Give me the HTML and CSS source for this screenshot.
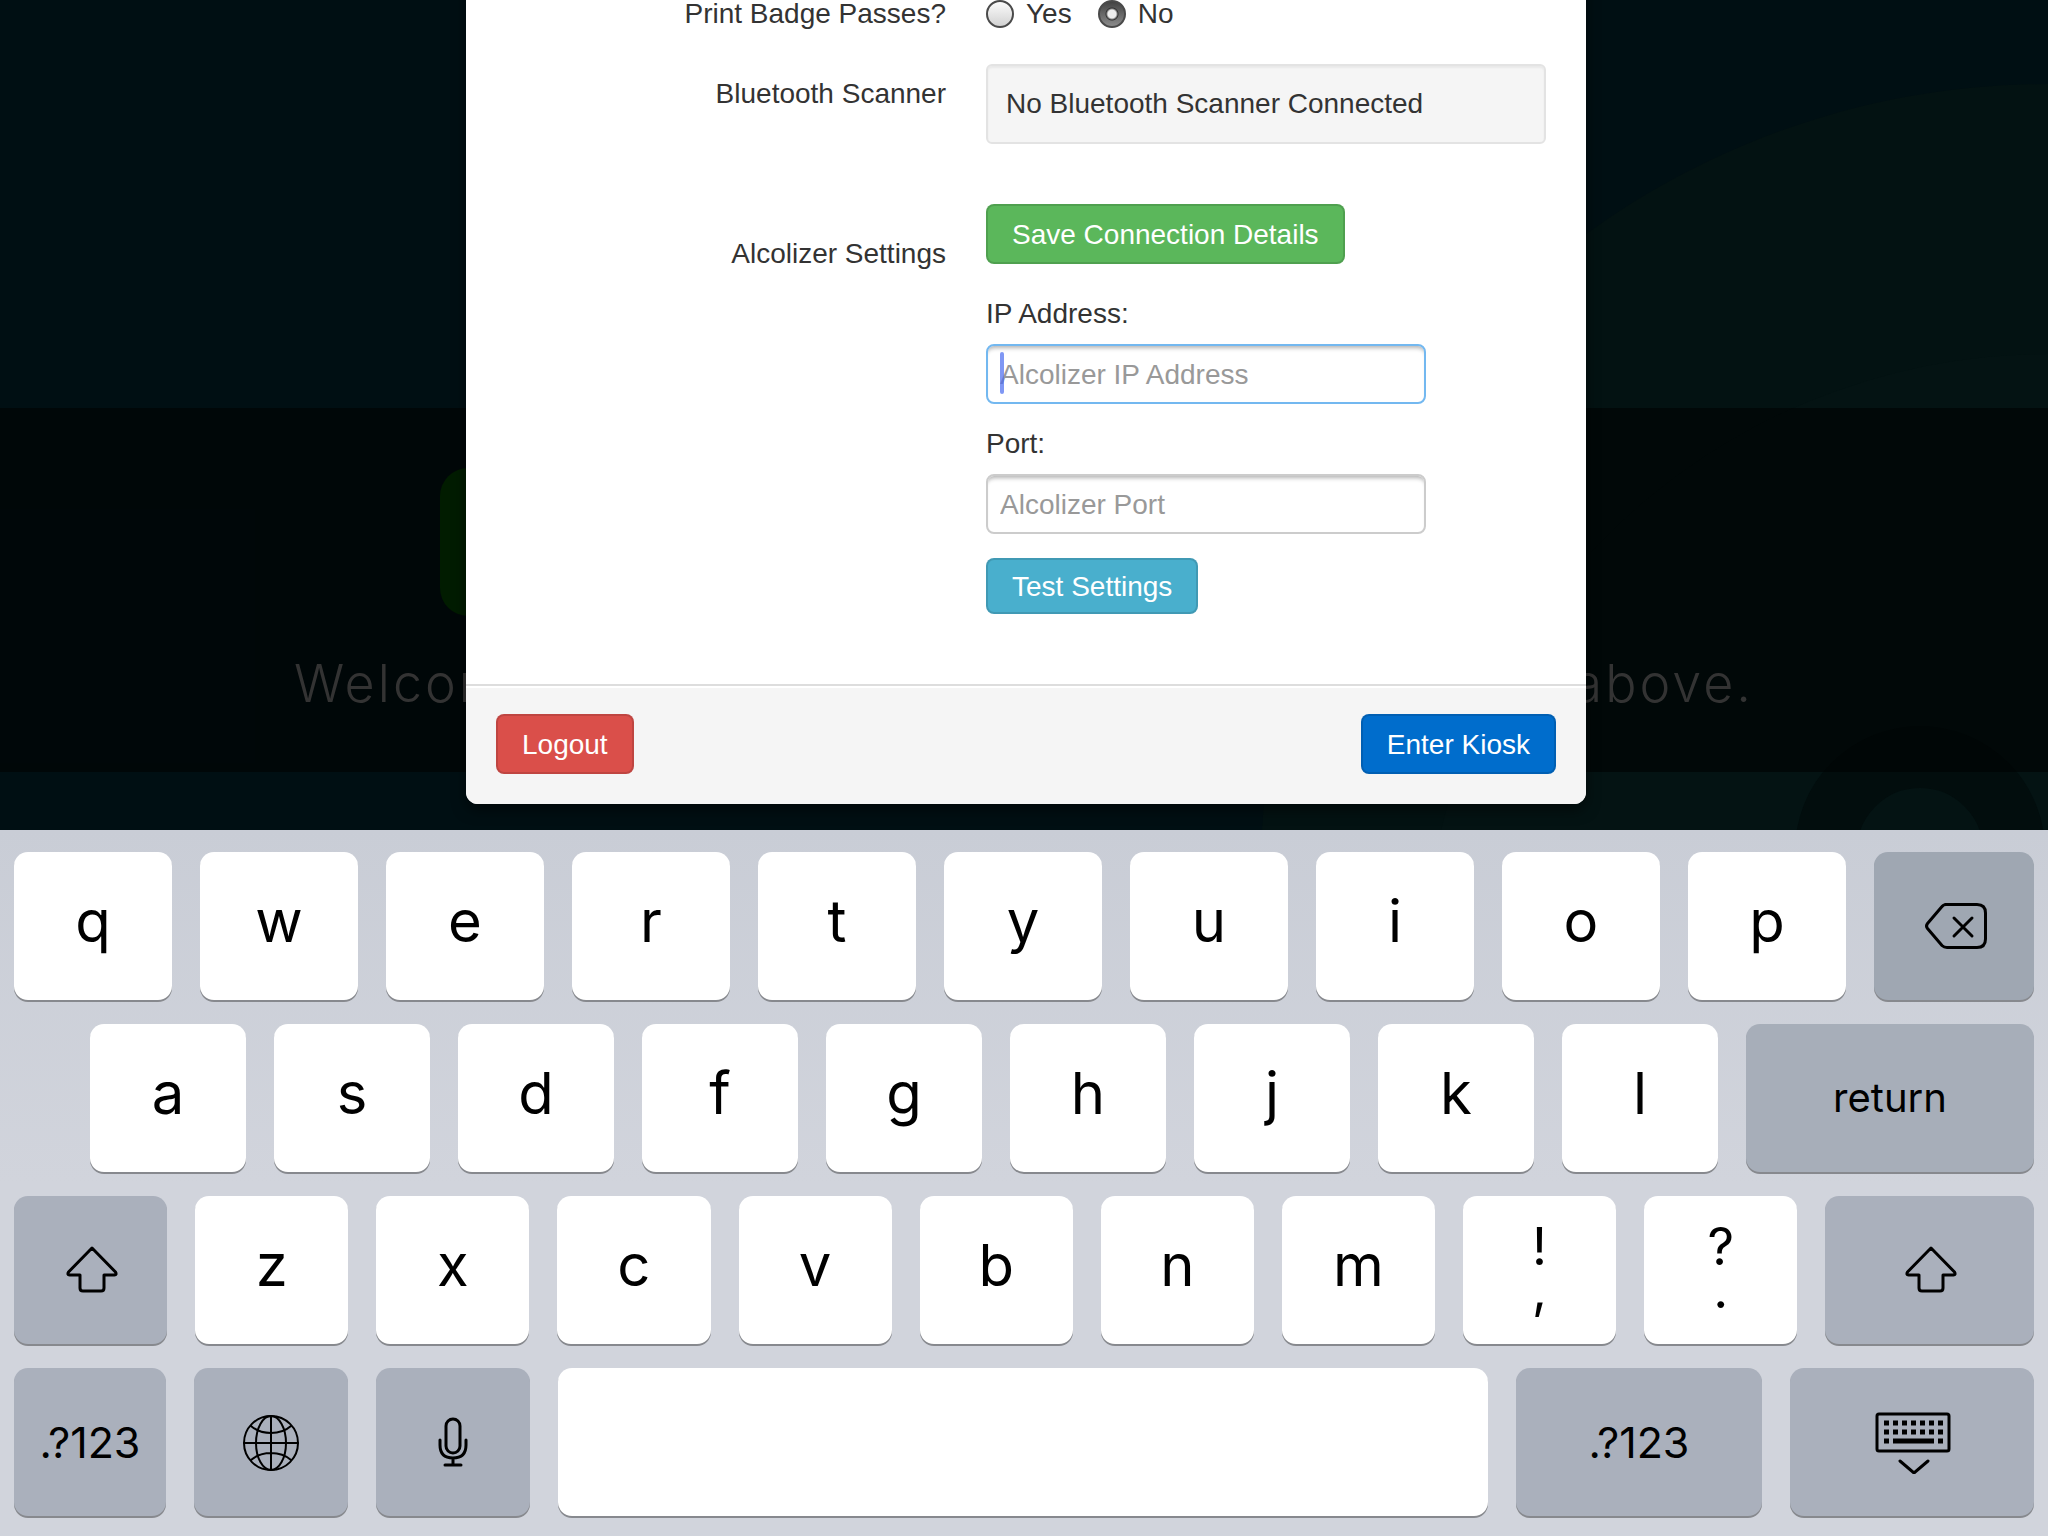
FILE: index.html
```html
<!DOCTYPE html>
<html lang="en">
  <head>
    <meta charset="UTF-8" />
    <meta name="viewport" content="width=device-width, initial-scale=1.0" />
    <title>Kiosk Settings</title>
    <link rel="stylesheet" href="styles.css">
  </head>
  <body>
    <main class="stage">
      <svg class="backdrop-art" width="1024" height="830" viewBox="1024 0 1024 830" aria-hidden="true">
        <circle cx="2048" cy="871" r="787" fill="#031212" />
        <circle cx="2048" cy="979" r="625" fill="#041313" />
        <circle cx="1920" cy="851" r="94" fill="none" stroke="#020d0d" stroke-width="62" />
      </svg>

      <section class="welcome">
        <div class="welcome-buttons">
          <div class="sign-in"></div>
        </div>
        <div class="welcome-text">
          <span>Welcome</span>
          <span>above.</span>
        </div>
      </section>

      <form class="modal">
        <div class="modal-body">
          <div class="form-row">
            <div class="row-label">Print Badge Passes?</div>
            <div class="radios">
              <label><input type="radio" name="badge" /> Yes</label>
              <label><input type="radio" name="badge" checked /> No</label>
            </div>
          </div>
          <div class="form-row row-scanner">
            <div class="row-label">Bluetooth Scanner</div>
            <div class="well">No Bluetooth Scanner Connected</div>
          </div>
          <div class="form-row row-alcolizer">
            <div class="row-label">Alcolizer Settings</div>
            <div class="controls">
              <button type="button" class="btn btn-success">Save Connection Details</button>
              <label class="field-label" for="ip">IP Address:</label>
              <div class="field">
                <input class="text-input focused" id="ip" type="text" placeholder="Alcolizer IP Address" />
                <span class="caret"></span>
              </div>
              <label class="field-label" for="port">Port:</label>
              <div class="field">
                <input class="text-input" id="port" type="text" placeholder="Alcolizer Port" />
              </div>
              <button type="button" class="btn btn-info">Test Settings</button>
            </div>
          </div>
        </div>
        <div class="modal-footer">
          <button type="button" class="btn btn-danger">Logout</button>
          <button type="button" class="btn btn-primary">Enter Kiosk</button>
        </div>
      </form>
    </main>

    <section class="keyboard">
      <div class="keys row-top">
        <button class="key">q</button>
        <button class="key">w</button>
        <button class="key">e</button>
        <button class="key">r</button>
        <button class="key">t</button>
        <button class="key">y</button>
        <button class="key">u</button>
        <button class="key">i</button>
        <button class="key">o</button>
        <button class="key">p</button>
        <button class="key key-dark" aria-label="delete">
          <svg width="68" height="48" viewBox="0 0 68 48">
            <path d="M25 2.500 H57 Q65.500 2.500 65.500 11 V37 Q65.500 45.500 57 45.500 H27 Q24 45.500 22 43.500 L7.500 26.500 Q5.500 24 7.500 21.500 L22 4.500 Q23.500 2.500 26 2.500 Z" />
            <path d="M34 16 L52 34 M52 16 L34 34" />
          </svg>
        </button>
      </div>

      <div class="keys row-home">
        <button class="key">a</button>
        <button class="key">s</button>
        <button class="key">d</button>
        <button class="key">f</button>
        <button class="key">g</button>
        <button class="key">h</button>
        <button class="key">j</button>
        <button class="key">k</button>
        <button class="key">l</button>
        <button class="key key-dark key-return">return</button>
      </div>

      <div class="keys row-shift">
        <button class="key key-dark" aria-label="shift">
          <svg width="54" height="48" viewBox="0 0 54 48">
            <path d="M28 2 L51.500 26 Q53 29 50.500 29 H40 V42 Q40 45 37 45 H19 Q16 45 16 42 V29 H5.500 Q3 29 4.500 26 Z" />
          </svg>
        </button>
        <button class="key">z</button>
        <button class="key">x</button>
        <button class="key">c</button>
        <button class="key">v</button>
        <button class="key">b</button>
        <button class="key">n</button>
        <button class="key">m</button>
        <button class="key key-double"><span>!</span><span>,</span></button>
        <button class="key key-double"><span>?</span><span>.</span></button>
        <button class="key key-dark key-wide-shift" aria-label="shift">
          <svg width="54" height="48" viewBox="0 0 54 48">
            <path d="M28 2 L51.500 26 Q53 29 50.500 29 H40 V42 Q40 45 37 45 H19 Q16 45 16 42 V29 H5.500 Q3 29 4.500 26 Z" />
          </svg>
        </button>
      </div>

      <div class="keys row-space">
        <button class="key key-dark key-symbols">.?123</button>
        <button class="key key-dark" aria-label="next keyboard">
          <svg width="60" height="60" viewBox="0 0 60 60">
            <g class="thin">
              <circle cx="30" cy="31" r="27" />
              <ellipse cx="30" cy="31" rx="15" ry="27" />
              <path d="M30 4 V58 M3 31 H57 M10 14 Q18 21 30 21 Q42 21 50 14 M10 48 Q18 41 30 41 Q42 41 50 48" />
            </g>
          </svg>
        </button>
        <button class="key key-dark" aria-label="dictate">
          <svg width="32" height="50" viewBox="0 0 32 50">
            <rect x="9" y="2" width="14" height="34" rx="7" />
            <path d="M3 23 V28 Q3 41 16 41 Q29 41 29 28 V23 M16 41 V48 M8 48 H24" />
          </svg>
        </button>
        <button class="key key-space" aria-label="space"></button>
        <button class="key key-dark key-symbols-wide">.?123</button>
        <button class="key key-dark key-hide" aria-label="hide keyboard">
          <svg width="78" height="64" viewBox="0 0 78 64">
            <rect x="4" y="4" width="72" height="37" rx="2" />
            <path class="dots" d="M11 13 H72 M11 22 H72" />
            <path class="bar" d="M11 31 H16 M20 31 H61 M65 31 H70" />
            <path d="M27 51 L41 63 L55 51" />
          </svg>
        </button>
      </div>
    </section>
  </body>
</html>
```
FILE: styles.css
```css
* {
  box-sizing: border-box;
}

body {
  margin: 0;
  min-height: 100vh;
  display: flex;
  flex-direction: column;
  background-color: #000f13;
  color: #333;
  font-family: "Liberation Sans", Arial, sans-serif;
  font-size: 28px;
  line-height: 40px;
}

button,
input {
  font-family: inherit;
  font-size: inherit;
  line-height: inherit;
}

/* kiosk page behind the modal */
.stage {
  position: relative;
  flex: 1;
  display: flex;
  flex-direction: column;
  justify-content: flex-end;
  overflow: hidden;
}

.backdrop-art {
  position: absolute;
  right: 0;
  bottom: 0;
}

.welcome {
  position: relative;
  margin-bottom: 58px;
  padding: 60px 0 56px;
  background-color: rgba(0, 2, 2, 0.6);
}

.welcome-buttons {
  max-width: 1168px;
  margin: 0 auto;
}

.sign-in {
  width: 50%;
  height: 148px;
  border-radius: 28px;
  background-color: #011c00;
}

.welcome-text {
  display: flex;
  justify-content: space-between;
  max-width: 1460px;
  margin: 36px auto 0;
  color: #333;
  font-family: Inter, sans-serif;
  font-size: 52px;
  font-weight: 300;
  line-height: 64px;
  letter-spacing: 3px;
}

/* modal */
.modal {
  position: absolute;
  bottom: 26px;
  left: 50%;
  width: 1120px;
  margin-left: -558px;
  border-radius: 12px;
  background-color: #fff;
  box-shadow: 0 6px 14px rgba(0, 0, 0, 0.5);
}

.modal-body {
  padding: 30px 40px 70px 30px;
}

.form-row {
  display: grid;
  grid-template-columns: 450px 1fr;
  gap: 40px;
}

.row-label {
  text-align: right;
}

.row-scanner {
  margin-top: 30px;
}

.row-scanner .row-label {
  padding-top: 10px;
}

.row-alcolizer {
  margin-top: 60px;
}

.row-alcolizer .row-label {
  padding-top: 30px;
}

.radios {
  display: flex;
  gap: 26px;
}

.radios label {
  display: flex;
  align-items: center;
  gap: 12px;
}

.radios input {
  appearance: none;
  width: 28px;
  height: 28px;
  margin: 0;
  border: 2px solid #4a4a4a;
  border-radius: 50%;
  background: linear-gradient(#fbfbfb, #d2d2d2);
}

.radios input:checked {
  background: radial-gradient(circle, #eee 4px, #333 6px, transparent 7px),
    linear-gradient(#444, #8a8a8a);
}

.well {
  padding: 18px;
  border: 2px solid #e3e3e3;
  border-radius: 6px;
  background-color: #f5f5f5;
  box-shadow: inset 0 2px 2px rgba(0, 0, 0, 0.05);
}

.controls {
  display: flex;
  flex-direction: column;
  align-items: flex-start;
}

.btn {
  height: 60px;
  padding: 2px 24px 0;
  border: 2px solid rgba(0, 0, 0, 0.12);
  border-radius: 8px;
  color: #fff;
}

.btn-success {
  background-color: #5bb75b;
}

.btn-info {
  height: 56px;
  margin-top: 24px;
  background-color: #49afcd;
}

.btn-danger {
  background-color: #da4f4a;
}

.btn-primary {
  background-color: #006dcc;
}

.field-label {
  margin: 20px 0 10px;
}

.btn-success + .field-label {
  margin-top: 30px;
}

.field {
  position: relative;
  width: 440px;
}

.text-input {
  display: block;
  width: 100%;
  height: 60px;
  padding: 2px 12px 0;
  border: 2px solid #ccc;
  border-radius: 8px;
  background-color: #fff;
  box-shadow: inset 0 5px 4px -3px rgba(0, 0, 0, 0.3);
}

.text-input::placeholder {
  color: #999;
}

.text-input.focused {
  border-color: #73b8f0;
}

.caret {
  position: absolute;
  top: 8px;
  left: 14px;
  width: 4px;
  height: 42px;
  border-radius: 2px;
  background-color: rgba(72, 107, 240, 0.7);
}

.modal-footer {
  display: flex;
  justify-content: space-between;
  padding: 28px 30px 30px;
  border-top: 2px solid #ddd;
  border-radius: 0 0 12px 12px;
  background-color: #f5f5f5;
  box-shadow: inset 0 2px 0 #fff;
}

/* on-screen keyboard */
.keyboard {
  display: flex;
  flex-direction: column;
  gap: 24px;
  padding: 22px 14px 20px;
  background: linear-gradient(#c9cdd6, #d1d4dc 50%);
}

.keys {
  display: flex;
  gap: 28px;
}

.key {
  flex: 154 1 0;
  display: flex;
  align-items: center;
  justify-content: center;
  min-width: 0;
  height: 148px;
  padding: 0 0 10px;
  border: 0;
  border-radius: 14px;
  background-color: #fff;
  box-shadow: 0 2px 0 #87898e;
  color: #000;
  font-family: Inter, sans-serif;
  font-size: 58px;
  font-weight: 400;
}

.key-dark {
  padding: 0;
  background-color: #aab0bc;
  font-size: 43px;
}

.key svg {
  fill: none;
  stroke: #000;
  stroke-width: 3;
  stroke-linecap: round;
  stroke-linejoin: round;
}

.key .thin {
  stroke-width: 2;
}

.key .dots {
  stroke-width: 5;
  stroke-linecap: butt;
  stroke-dasharray: 5 4;
}

.key .bar {
  stroke-width: 5;
  stroke-linecap: butt;
}

.row-top .key {
  flex-grow: 158;
}

.row-top .key-dark {
  flex-grow: 160;
  background-color: #9fa7b2;
}

.row-home {
  padding-left: 76px;
}

.row-home .key {
  flex-grow: 156;
}

.row-home .key-return {
  flex-grow: 288;
  background-color: #a7aeb9;
  font-size: 40px;
}

.key-double {
  flex-direction: column;
  padding: 0 0 4px;
  font-size: 52px;
  line-height: 43px;
}

.key-wide-shift {
  flex-grow: 210;
}

.key-symbols {
  flex-grow: 152;
}

.key-space {
  flex-grow: 930;
}

.key-symbols-wide {
  flex-grow: 246;
}

.key-hide {
  flex-grow: 244;
}
```
